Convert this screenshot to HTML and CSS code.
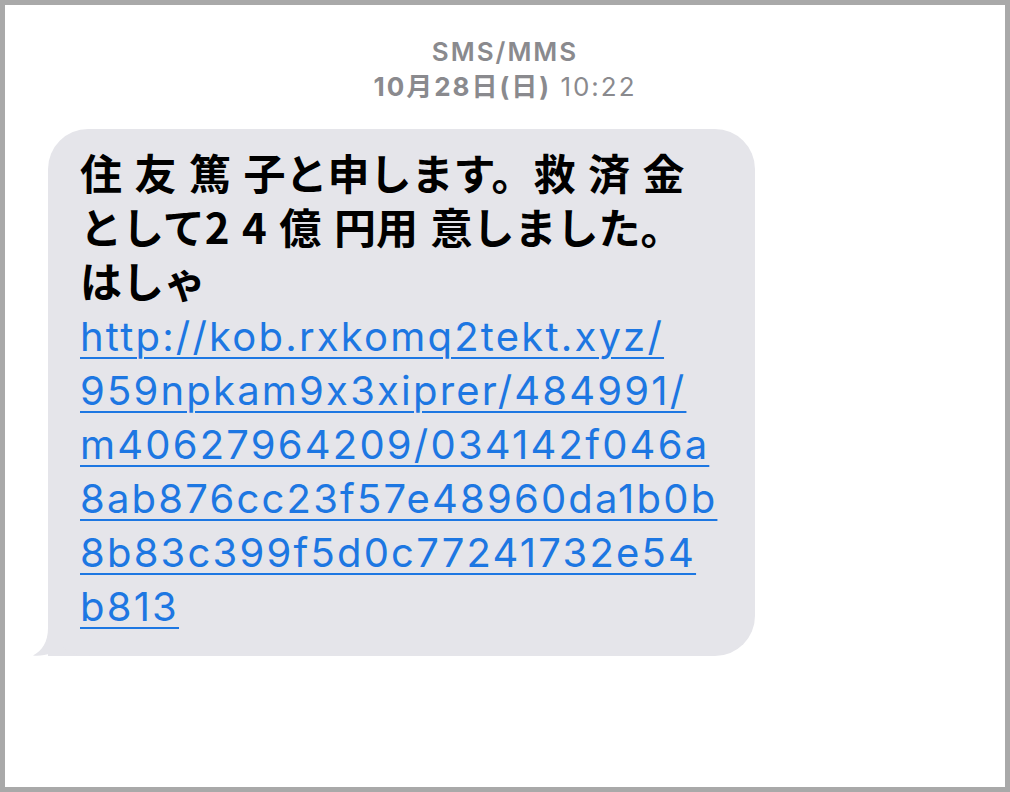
FILE: index.html
```html
<!DOCTYPE html>
<html lang="ja">
<head>
    <meta charset="UTF-8">
    <meta name="viewport" content="width=device-width, initial-scale=1.0">
    <title>SMS/MMS</title>
    <link rel="stylesheet" href="styles.css">
</head>
<body>
    <div class="frame">
        <div class="thread-head">
            <div class="service">SMS/MMS</div>
            <div class="stamp"><b>10月28日(日)</b> 10:22</div>
        </div>

        <div class="bubble">
            <svg class="tail" width="60" height="34" viewBox="0 0 60 34">
                <path d="M16 0 L16 6 C16 20 10 29 1 33.5 C12 34.5 24 31 31 25.5 C37 31 45 34 60 34 L60 0 Z" fill="#e5e5ea"/>
            </svg>
            <p class="body-ja">住 友 篤 子と申します。救 済 金<br>として2 4 億 円用 意しました。<br>はしゃ</p>
            <p class="body-url"><a href="#">http://kob.rxkomq2tekt.xyz/<br>959npkam9x3xiprer/484991/<br>m40627964209/034142f046a<br>8ab876cc23f57e48960da1b0b<br>8b83c399f5d0c77241732e54<br>b813</a></p>
        </div>
    </div>
</body>
</html>
```

FILE: styles.css
```css
body {
    margin: 0;
    background-color: white;
    font-family: Inter, "Noto Sans CJK JP", sans-serif;
}
.frame {
    width: 1010px;
    height: 792px;
    box-sizing: border-box;
    border: 5px solid #a9a9a9;
    background-color: white;
}
.thread-head {
    padding-top: 29px;
    text-align: center;
    color: #8a8a8e;
    font-size: 26px;
    line-height: 35px;
    letter-spacing: 2px;
}
.service {
    font-weight: 600;
}
.stamp b {
    font-weight: 700;
}
.bubble {
    position: relative;
    width: 707px;
    box-sizing: border-box;
    margin: 25px 0 0 43px;
    padding: 16px 20px 22px 32px;
    background-color: #e5e5ea;
    border-radius: 40px 40px 40px 0;
}
.bubble p {
    position: relative;
    margin: 0;
    white-space: nowrap;
}
.body-ja {
    font-family: "Noto Sans CJK JP", sans-serif;
    font-weight: 700;
    font-size: 42px;
    line-height: 54px;
    word-spacing: 3px;
    color: black;
}
.body-url {
    margin-top: 3px !important;
    font-size: 40px;
    line-height: 54px;
    letter-spacing: 2.2px;
}
.body-url a {
    color: #1d77e2;
    text-decoration: underline;
    text-decoration-thickness: 2px;
    text-underline-offset: 6px;
}
.tail {
    position: absolute;
    left: -16px;
    bottom: 0;
}
```
